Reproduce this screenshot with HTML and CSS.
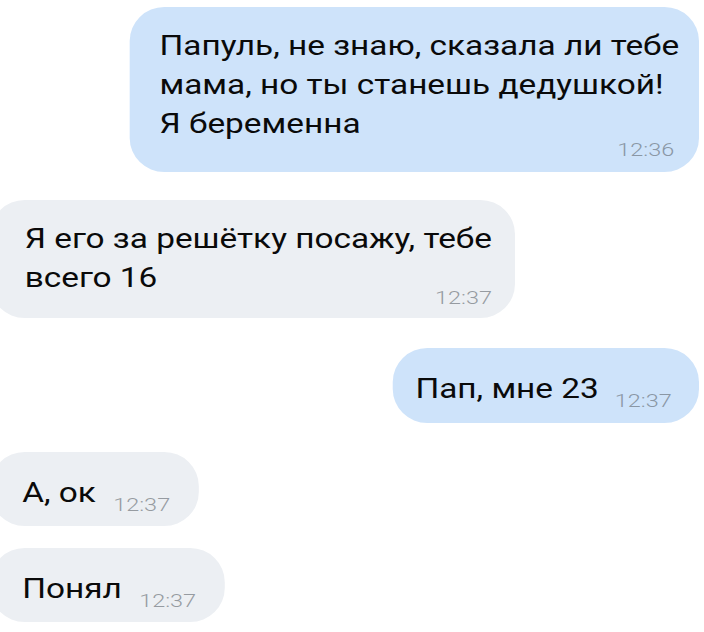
FILE: index.html
```html
<!DOCTYPE html>
<html lang="ru">
<head>
<meta charset="utf-8">
<title>Чат</title>
<link rel="stylesheet" href="styles.css">
</head>
<body>
<div class="chat">
  <div class="row out">
    <div class="bubble multi long">
      <p class="text">Папуль, не знаю, сказала ли тебе<br>мама, но ты станешь дедушкой!<br>Я беременна</p>
      <span class="time">12:36</span>
    </div>
  </div>
  <div class="row in near">
    <div class="bubble multi">
      <p class="text">Я его за решётку посажу, тебе<br>всего 16</p>
      <span class="time">12:37</span>
    </div>
  </div>
  <div class="row out far">
    <div class="bubble single">
      <p class="text">Пап, мне 23</p>
      <span class="time">12:37</span>
    </div>
  </div>
  <div class="row in">
    <div class="bubble single">
      <p class="text">А, ок</p>
      <span class="time">12:37</span>
    </div>
  </div>
  <div class="row in close">
    <div class="bubble single">
      <p class="text">Понял</p>
      <span class="time">12:37</span>
    </div>
  </div>
</div>
</body>
</html>
```

FILE: styles.css
```css
html, body {
  margin: 0;
  padding: 0;
  background: #ffffff;
}

body {
  font-family: Roboto, "Noto Sans", "DejaVu Sans", sans-serif;
  color: #0a0a0a;
  overflow: hidden;
}

/* the original screenshot is stretched horizontally */
.chat {
  width: 570px;
  display: flex;
  flex-direction: column;
  padding-top: 7px;
  transform: scaleX(1.235);
  transform-origin: 0 0;
}

.row {
  display: flex;
  margin-top: 29px;
}

.row:first-child {
  margin-top: 0;
}

.row.near {
  margin-top: 28px;
}

.row.far {
  margin-top: 30px;
}

.row.close {
  margin-top: 22px;
}

.row.out {
  justify-content: flex-end;
  padding-right: 4px;
}

.row.in {
  justify-content: flex-start;
  margin-left: -8px;
}

.bubble {
  border-radius: 28px / 34px;
  display: flex;
}

.out .bubble {
  background: #cee3fa;
}

.in .bubble {
  background: #eceff3;
}

.text {
  margin: 0;
  font-size: 27px;
  line-height: 39px;
  white-space: nowrap;
}

.time {
  font-size: 19px;
  line-height: 20px;
  font-weight: 300;
  white-space: nowrap;
}

.out .time {
  color: #8a97a5;
}

.in .time {
  color: #969ba1;
}

.bubble.multi {
  flex-direction: column;
  padding: 20px 19px 10px 28px;
}

.bubble.multi .time {
  align-self: flex-end;
  margin-top: -10px;
}

.bubble.multi.long {
  padding: 20px 16px 12px 24px;
}

.bubble.multi.long .time {
  margin-top: -4px;
  margin-right: 4px;
}

.bubble.single {
  align-items: flex-end;
  gap: 14px;
  padding: 22px 23px 13px 26px;
}

.out .bubble.single {
  gap: 13px;
  padding: 22px 22px 14px 18px;
}

.bubble.single .time {
  margin-bottom: -2px;
}
```
